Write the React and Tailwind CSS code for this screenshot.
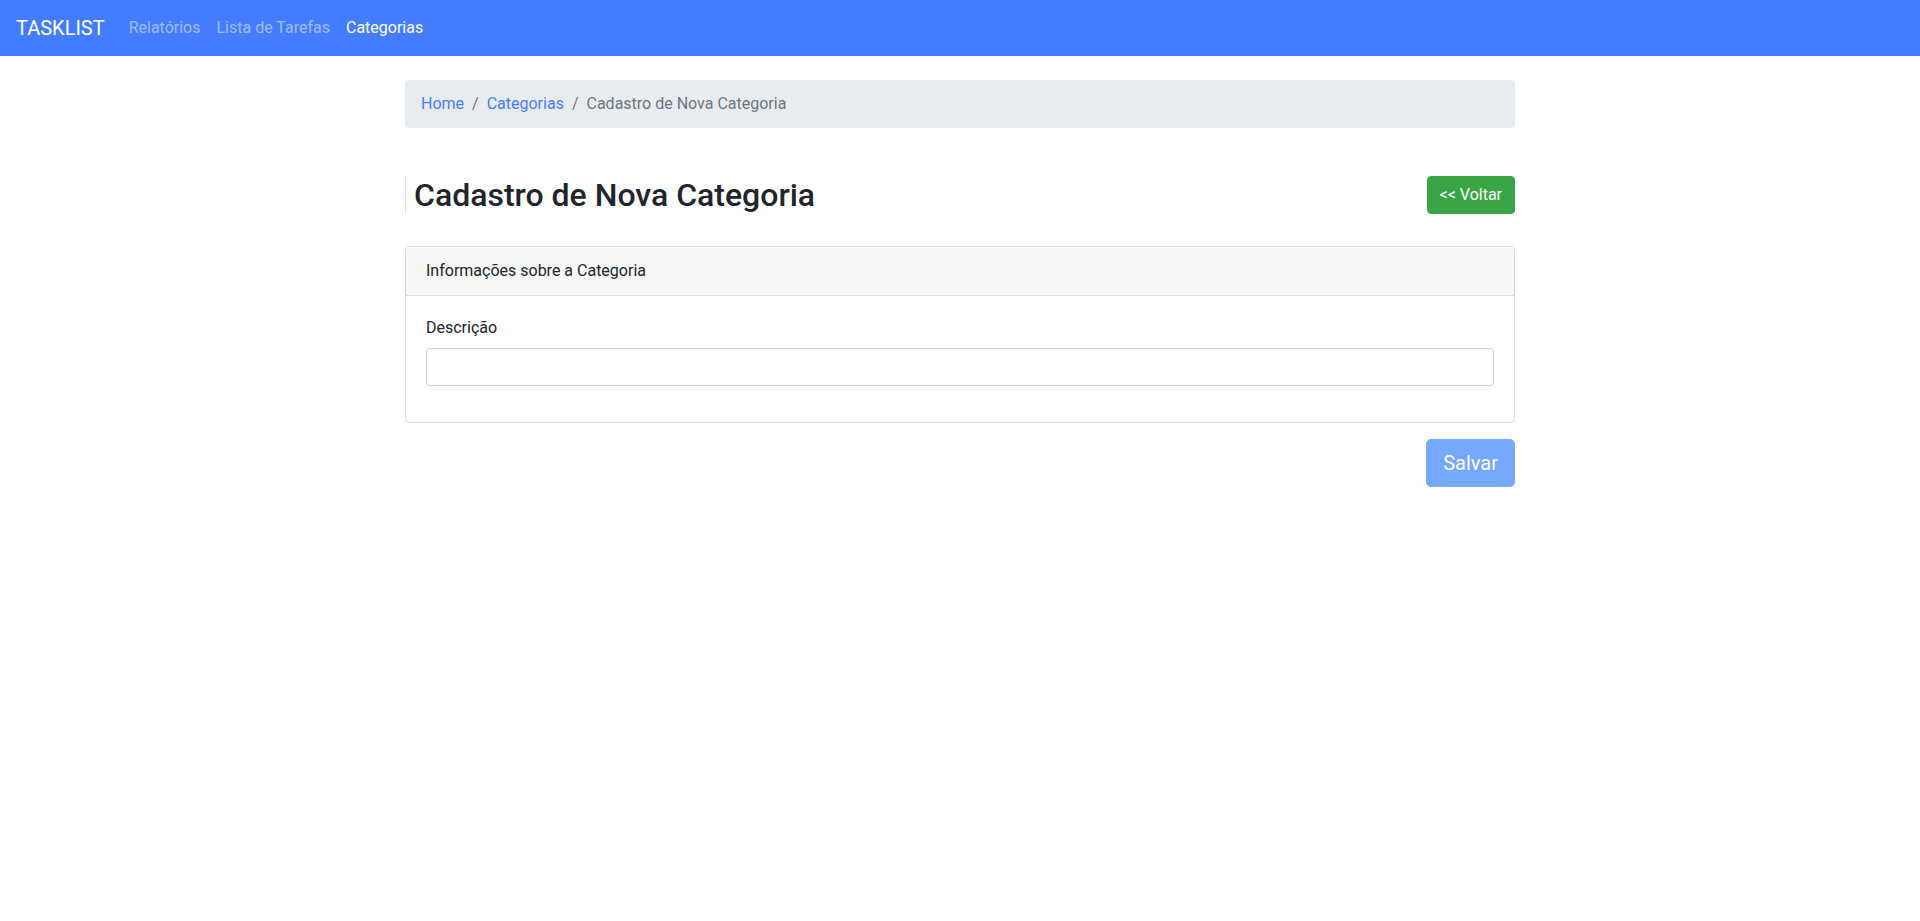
import React from 'react';

const NavBar = () => (
    <nav className="flex h-14 items-center bg-[#437cff] px-4">
        <a href="#" className="mr-4 text-[20px] leading-[30px] text-white">TASKLIST</a>
        <div className="flex items-center">
            <a href="#" className="px-2 text-base text-white/50">Relatórios</a>
            <a href="#" className="px-2 text-base text-white/50">Lista de Tarefas</a>
            <a href="#" className="px-2 text-base text-white">Categorias</a>
        </div>
    </nav>
);

const Breadcrumb = () => (
    <ol className="mt-6 flex items-center rounded bg-[#e9ecef] px-4 py-3 text-base leading-6">
        <li><a href="#" className="text-[#437cff]">Home</a></li>
        <li className="px-2 text-[#6c757d]">/</li>
        <li><a href="#" className="text-[#437cff]">Categorias</a></li>
        <li className="px-2 text-[#6c757d]">/</li>
        <li className="text-[#6c757d]">Cadastro de Nova Categoria</li>
    </ol>
);

export default function App() {
    return (
        <div className="min-h-screen bg-white text-[#212529]" style={{ fontFamily: 'Roboto, "Noto Sans", sans-serif' }}>
            <NavBar />
            <div className="mx-auto w-[1140px] px-[15px]">
                <Breadcrumb />

                <div className="mt-12 flex items-center justify-between">
                    <h2 className="border-l border-[#e3e3e3] pl-2 text-[32px] font-medium leading-[38px]">
                        Cadastro de Nova Categoria
                    </h2>
                    <button
                        type="button"
                        className="h-[38px] rounded border border-[#3aa547] bg-[#3aa547] px-3 text-base leading-6 text-white"
                    >
                        &lt;&lt; Voltar
                    </button>
                </div>

                <div className="mt-8 rounded border border-[#dcdcdc]">
                    <div className="border-b border-[#dcdcdc] bg-[#f7f7f7] px-5 py-3 text-base leading-6">
                        Informações sobre a Categoria
                    </div>
                    <div className="p-5 pb-[36px]">
                        <label className="mb-2 block text-base leading-6">Descrição</label>
                        <input
                            type="text"
                            className="block h-[38px] w-full rounded border border-[#ced4da] px-3 text-base outline-none"
                        />
                    </div>
                </div>

                <div className="mt-4 flex justify-end">
                    <button
                        type="button"
                        disabled
                        className="h-12 rounded-[5px] border border-[#74a9ff] bg-[#74a9ff] px-4 text-[20px] leading-[30px] text-white"
                    >
                        Salvar
                    </button>
                </div>
            </div>
        </div>
    );
}
